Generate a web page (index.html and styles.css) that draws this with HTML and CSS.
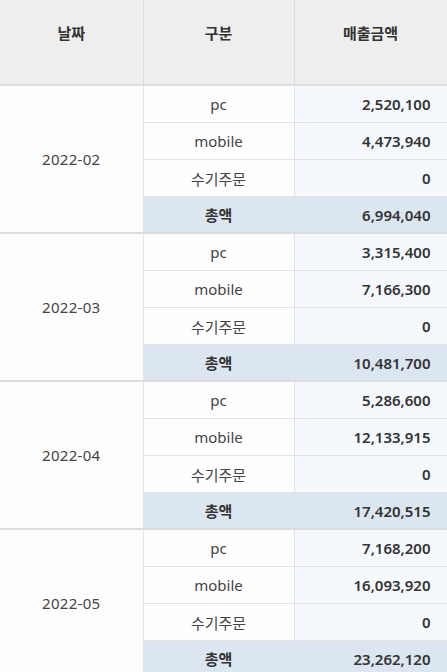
FILE: index.html
```html
<!DOCTYPE html>
<html lang="ko">
<head>
<meta charset="utf-8">
<title>매출</title>
<link rel="stylesheet" href="styles.css">
</head>
<body>
<table class="sales">
  <colgroup><col class="c-date"><col class="c-type"><col class="c-amt"></colgroup>
  <thead>
    <tr><th>날짜</th><th>구분</th><th>매출금액</th></tr>
  </thead>
  <tbody>
    <tr class="first"><td class="date" rowspan="4">2022-02</td><td class="type">pc</td><td class="amt">2,520,100</td></tr>
    <tr><td class="type">mobile</td><td class="amt">4,473,940</td></tr>
    <tr><td class="type">수기주문</td><td class="amt">0</td></tr>
    <tr class="total"><td class="type">총액</td><td class="amt">6,994,040</td></tr>

    <tr class="first"><td class="date" rowspan="4">2022-03</td><td class="type">pc</td><td class="amt">3,315,400</td></tr>
    <tr><td class="type">mobile</td><td class="amt">7,166,300</td></tr>
    <tr><td class="type">수기주문</td><td class="amt">0</td></tr>
    <tr class="total"><td class="type">총액</td><td class="amt">10,481,700</td></tr>

    <tr class="first"><td class="date" rowspan="4">2022-04</td><td class="type">pc</td><td class="amt">5,286,600</td></tr>
    <tr><td class="type">mobile</td><td class="amt">12,133,915</td></tr>
    <tr><td class="type">수기주문</td><td class="amt">0</td></tr>
    <tr class="total"><td class="type">총액</td><td class="amt">17,420,515</td></tr>

    <tr class="first"><td class="date" rowspan="4">2022-05</td><td class="type">pc</td><td class="amt">7,168,200</td></tr>
    <tr><td class="type">mobile</td><td class="amt">16,093,920</td></tr>
    <tr><td class="type">수기주문</td><td class="amt">0</td></tr>
    <tr class="total"><td class="type">총액</td><td class="amt">23,262,120</td></tr>
  </tbody>
</table>
</body>
</html>
```

FILE: styles.css
```css
html, body {
  margin: 0;
  padding: 0;
  background: #ffffff;
}

body {
  font-family: "Noto Sans", "Noto Sans CJK KR", sans-serif;
  font-size: 15px;
  color: #444444;
}

.sales {
  width: 447px;
  border-collapse: collapse;
  table-layout: fixed;
}

.c-date { width: 143px; }
.c-type { width: 151px; }
.c-amt { width: 153px; }

.sales th {
  height: 85px;
  padding: 0 0 20px;
  box-sizing: border-box;
  background: #eeeeee;
  color: #333333;
  font-weight: 700;
  font-size: 15px;
  text-align: center;
  vertical-align: middle;
  border-left: 1px solid #dddddd;
  border-right: 1px solid #dddddd;
  border-bottom: 2px solid #dddddd;
}

.sales th:first-child { border-left: none; }

.sales td {
  height: 36px;
  padding: 0;
  border: 1px solid #e2e2e2;
  vertical-align: middle;
}

.sales td:first-child { border-left: none; }

.sales tr.first td {
  border-top: 2px solid #dddddd;
}

.sales tr.total td { height: 35px; }

.date {
  background: #fdfdfd;
  text-align: center;
  color: #444444;
  letter-spacing: 0.3px;
}

.type {
  background: #fefefe;
  text-align: center;
  color: #444444;
}

.amt {
  background: #f5f9fd;
  text-align: right;
  padding-right: 16px !important;
  font-weight: 600;
  color: #333333;
}

.total .type,
.total .amt {
  background: #dbe6f0;
  color: #333333;
}

.total .type { font-weight: 700; }
```
